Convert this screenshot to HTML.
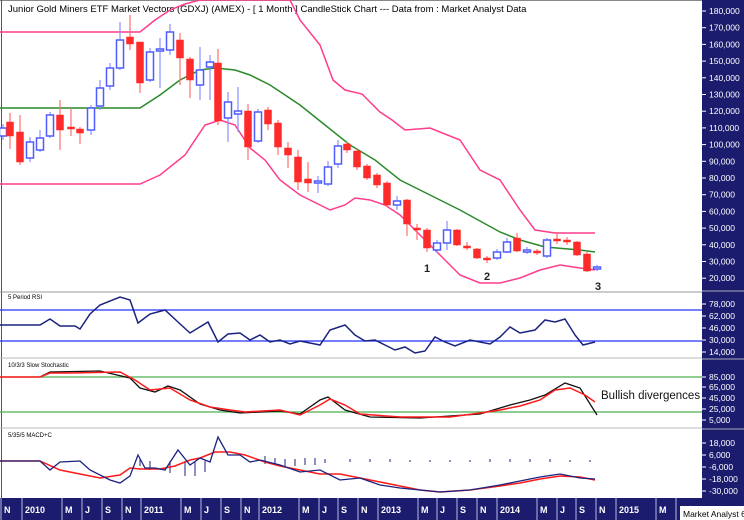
<!DOCTYPE html><html><head><meta charset="utf-8"><style>
body{margin:0;width:744px;height:520px;overflow:hidden;background:#fff;font-family:"Liberation Sans",sans-serif}
svg{display:block}
</style></head><body>
<svg id="s" width="744" height="520" xmlns="http://www.w3.org/2000/svg" font-family="Liberation Sans, sans-serif">
<rect x="0" y="0" width="744" height="520" fill="#fff"/>
<line x1="0" y1="0.5" x2="702" y2="0.5" stroke="#888"/>
<line x1="1.5" y1="0" x2="1.5" y2="498" stroke="#555"/>
<text x="8" y="12" font-size="9.5" fill="#000">Junior Gold Miners ETF Market Vectors (GDXJ) (AMEX) -  [ 1 Month ] CandleStick Chart --- Data from : Market Analyst Data</text>
<!-- bands -->
<polyline fill="none" stroke="#ff3d8c" stroke-width="1.5" points="0,32 140,32 155,20 170,10 185,4 200,0 290,0 300,20 320,45 333,80 345,90 362,94 380,112 392,120 405,130 430,128 460,140 480,170 500,180 520,210 535,230 555,233 595,233"/>
<polyline fill="none" stroke="#ff3d8c" stroke-width="1.5" points="0,184 140,184 160,175 185,155 205,125 220,120 235,125 250,148 265,160 280,180 300,195 320,205 330,210 345,205 355,198 370,200 385,205 400,215 415,230 430,245 445,260 460,275 480,283 500,283 520,278 540,270 560,265 580,268 595,270"/>
<polyline fill="none" stroke="#2a8a2a" stroke-width="1.5" points="0,108 140,108 160,95 180,80 200,70 215,68 235,70 250,75 270,85 300,105 325,125 350,145 375,160 400,180 430,195 460,210 500,232 520,240 545,247 580,250 595,252"/>
<g id="c"></g>
<text x="424" y="272" font-size="11" font-weight="bold" fill="#222">1</text>
<text x="484" y="280" font-size="11" font-weight="bold" fill="#222">2</text>
<text x="595" y="290" font-size="11" font-weight="bold" fill="#222">3</text>
<!-- separators -->
<line x1="0" y1="292" x2="702" y2="292" stroke="#999"/>
<line x1="0" y1="358" x2="702" y2="358" stroke="#bbb"/>
<line x1="0" y1="428" x2="702" y2="428" stroke="#bbb"/>
<!-- RSI -->
<text x="8" y="299" font-size="6" fill="#000">5 Period RSI</text>
<line x1="0" y1="310" x2="702" y2="310" stroke="#2030ff" stroke-width="1.2"/>
<line x1="0" y1="341" x2="702" y2="341" stroke="#2030ff" stroke-width="1.2"/>
<polyline fill="none" stroke="#1a237e" stroke-width="1.5" points="0,325 40,325 50,319 60,326 75,326 80,329 90,314 100,305 120,297 130,300 138,323 150,314 165,310 178,322 190,333 208,322 218,342 228,334 240,333 250,340 260,335 270,342 280,340 290,344 300,341 310,343 320,345 330,330 345,325 355,335 365,341 375,340 385,345 395,350 405,347 415,353 425,351 435,337 445,342 455,346 470,340 480,342 490,344 500,337 510,327 520,333 535,330 545,320 555,322 565,319 575,335 583,345 595,342"/>
<!-- Stoch -->
<text x="8" y="367" font-size="6" fill="#000">10/3/3 Slow Stochastic</text>
<line x1="0" y1="377" x2="702" y2="377" stroke="#4caf50" stroke-width="1.2"/>
<line x1="0" y1="412" x2="702" y2="412" stroke="#4caf50" stroke-width="1.2"/>
<polyline fill="none" stroke="#111" stroke-width="1.3" points="40,377 50,372 100,371 130,378 140,388 155,392 168,386 180,390 200,404 220,410 240,413 280,411 300,414 320,400 328,397 345,410 370,417 420,418 480,414 510,405 530,400 545,395 565,383 580,388 597,415"/>
<polyline fill="none" stroke="#ff1a1a" stroke-width="1.5" points="0,377 40,377 50,373 70,373 120,372 135,380 150,390 170,388 190,400 210,407 230,410 245,412 280,410 300,415 320,405 330,399 345,405 360,414 400,417 450,417 480,413 500,410 520,406 540,400 555,390 570,388 585,395 595,402"/>
<text x="601" y="399" font-size="11.5" fill="#111">Bullish divergences</text>
<!-- MACD -->
<text x="8" y="437" font-size="6" fill="#000">5/35/5 MACD+C</text>
<g id="h" stroke="#1a237e" stroke-width="1"></g>
<polyline fill="none" stroke="#ff1a1a" stroke-width="1.5" points="0,461 40,461 60,470 80,474 100,478 120,475 130,468 140,469 160,469 175,466 190,460 200,458 215,452 230,452 245,455 265,462 280,466 300,470 320,474 340,474 360,478 380,482 400,486 420,490 440,492 470,490 500,486 520,483 540,479 560,476 580,477 595,480"/>
<polyline fill="none" stroke="#1a237e" stroke-width="1.3" points="0,461 40,461 50,470 60,462 80,461 90,470 110,480 120,483 130,476 138,455 145,468 155,468 165,470 178,450 190,465 200,458 210,462 218,437 228,455 240,455 250,462 260,460 280,465 300,472 320,470 340,480 360,478 380,485 400,488 420,490 440,492 470,490 500,485 520,481 540,477 560,474 580,478 595,479"/>
<!-- right axis -->
<rect x="702" y="0" width="42" height="498" fill="#1c1c6e"/>
<line x1="702" y1="291" x2="744" y2="291" stroke="#aab" stroke-width="1"/>
<line x1="702" y1="359" x2="744" y2="359" stroke="#aab" stroke-width="1"/>
<line x1="702" y1="429" x2="744" y2="429" stroke="#aab" stroke-width="1"/>
<g id="ax" fill="#fff" font-size="8.5"></g>
<!-- bottom axis -->
<rect x="0" y="498" width="744" height="22" fill="#1c1c6e"/>
<g id="bx" fill="#fff" font-size="9" font-weight="bold"></g>
<rect x="680" y="506" width="64" height="14" fill="#fff"/>
<text x="683" y="517" font-size="8.5" fill="#000">Market Analyst 6</text>
</svg>
<script>
var NS="http://www.w3.org/2000/svg";
function el(p,t,a,txt){var e=document.createElementNS(NS,t);for(var k in a)e.setAttribute(k,a[k]);if(txt)e.textContent=txt;p.appendChild(e);return e;}
// x, bodyTop, bodyBot, wickTop, wickBot, type (b=blue hollow, r=red)
var C=[[3,128,136,124,140,'b'],[10,122,136,113,149,'r'],[20,132,162,115,165,'r'],[30,142,158,137,162,'b'],[40,138,150,130,152,'b'],[50,115,136,112,138,'b'],[60,115,130,100,150,'r'],[71,127,129,108,136,'r'],[80,129,133,127,144,'r'],[91,108,130,105,135,'b'],[100,88,106,80,110,'b'],[110,68,86,63,90,'b'],[120,40,68,22,70,'b'],[130,37,44,15,50,'r'],[140,42,83,42,93,'r'],[150,52,80,48,82,'b'],[160,49,51,38,88,'b'],[170,32,50,24,55,'b'],[180,40,58,33,85,'r'],[190,59,80,57,98,'r'],[200,70,85,47,100,'b'],[210,62,67,55,100,'b'],[218,63,121,49,125,'r'],[228,102,118,92,142,'b'],[238,111,114,87,132,'b'],[248,111,147,104,160,'r'],[258,112,141,109,143,'b'],[268,110,124,107,130,'r'],[278,123,147,120,155,'r'],[288,148,155,142,168,'r'],[298,157,182,150,190,'r'],[308,179,183,162,192,'r'],[318,181,183,176,193,'b'],[328,167,184,161,186,'b'],[338,146,164,140,168,'b'],[347,144,150,142,153,'r'],[357,151,167,148,170,'r'],[367,166,178,164,180,'r'],[377,175,185,173,188,'r'],[387,183,205,181,207,'r'],[397,201,205,196,210,'b'],[407,200,224,199,236,'r'],[417,228,230,224,240,'r'],[427,230,248,228,252,'r'],[437,243,250,240,253,'b'],[447,230,243,221,250,'b'],[457,230,245,229,246,'r'],[467,246,248,242,250,'r'],[477,249,258,248,259,'r'],[487,258,260,256,263,'r'],[497,252,258,249,260,'b'],[507,242,252,238,253,'b'],[517,238,251,233,252,'r'],[527,250,252,247,254,'b'],[537,251,253,249,255,'r'],[547,240,256,238,258,'b'],[557,239,241,232,244,'r'],[567,240,242,237,245,'r'],[577,242,255,241,256,'r'],[587,254,271,252,272,'r'],[597,267,269,265,271,'b']];
var g=document.getElementById('c');
C.forEach(function(c){var blue=c[5]=='b';var col=blue?'#4f5cff':'#ff2a2a';
el(g,'line',{x1:c[0],y1:c[3],x2:c[0],y2:c[4],stroke:blue?'#8a90ff':'#ff7070','stroke-width':1.2});
el(g,'rect',{x:c[0]-3.5,y:c[1],width:7,height:Math.max(2,c[2]-c[1]),fill:blue?'#fff':col,stroke:col,'stroke-width':blue?1.5:0.5});});
// histogram
var h=document.getElementById('h');
var H=[[150,461,470],[170,461,473],[185,461,476],[195,461,476],[205,461,472],[140,458,466],[265,456,464],[275,458,464],[285,459,466],[295,459,466],[305,458,465],[315,458,465],[325,459,463],[350,459,462],[370,459,462],[390,459,462],[410,460,462],[430,460,462],[450,460,462],[470,460,462],[490,459,462],[510,459,462],[530,459,462],[550,459,462],[570,460,462],[590,460,462]];
H.forEach(function(d){el(h,'line',{x1:d[0],y1:d[1],x2:d[0],y2:d[2]});});
// right axis labels
var ax=document.getElementById('ax');
for(var i=0;i<17;i++){var v=180-i*10;var y=11+i*16.7;el(ax,'line',{x1:702,y1:y,x2:706,y2:y,stroke:'#fff'});el(ax,'text',{x:709,y:y+3},v+',000');}
[[304,'78,000'],[316,'62,000'],[328,'46,000'],[340,'30,000'],[352,'14,000'],[377,'85,000'],[387,'65,000'],[398,'45,000'],[409,'25,000'],[420,'5,000'],[443,'18,000'],[455,'6,000'],[467,'-6,000'],[479,'-18,000'],[491,'-30,000']].forEach(function(a){el(ax,'line',{x1:702,y1:a[0],x2:706,y2:a[0],stroke:'#fff'});el(ax,'text',{x:709,y:a[0]+3},a[1]);});
// bottom axis
var bx=document.getElementById('bx');
var L=[[0,'N'],[21,'2010'],[61,'M'],[81,'J'],[101,'S'],[121,'N'],[140,'2011'],[180,'M'],[200,'J'],[220,'S'],[240,'N'],[258,'2012'],[298,'M'],[318,'J'],[337,'S'],[357,'N'],[377,'2013'],[417,'M'],[436,'J'],[456,'S'],[476,'N'],[496,'2014'],[536,'M'],[556,'J'],[575,'S'],[595,'N'],[615,'2015'],[655,'M'],[675,'']];
L.forEach(function(l){el(bx,'line',{x1:l[0]+1,y1:498,x2:l[0]+1,y2:520,stroke:'#9aa0c8','stroke-width':1.2});if(l[1])el(bx,'text',{x:l[0]+4,y:513},l[1]);});
</script>
</body></html>
